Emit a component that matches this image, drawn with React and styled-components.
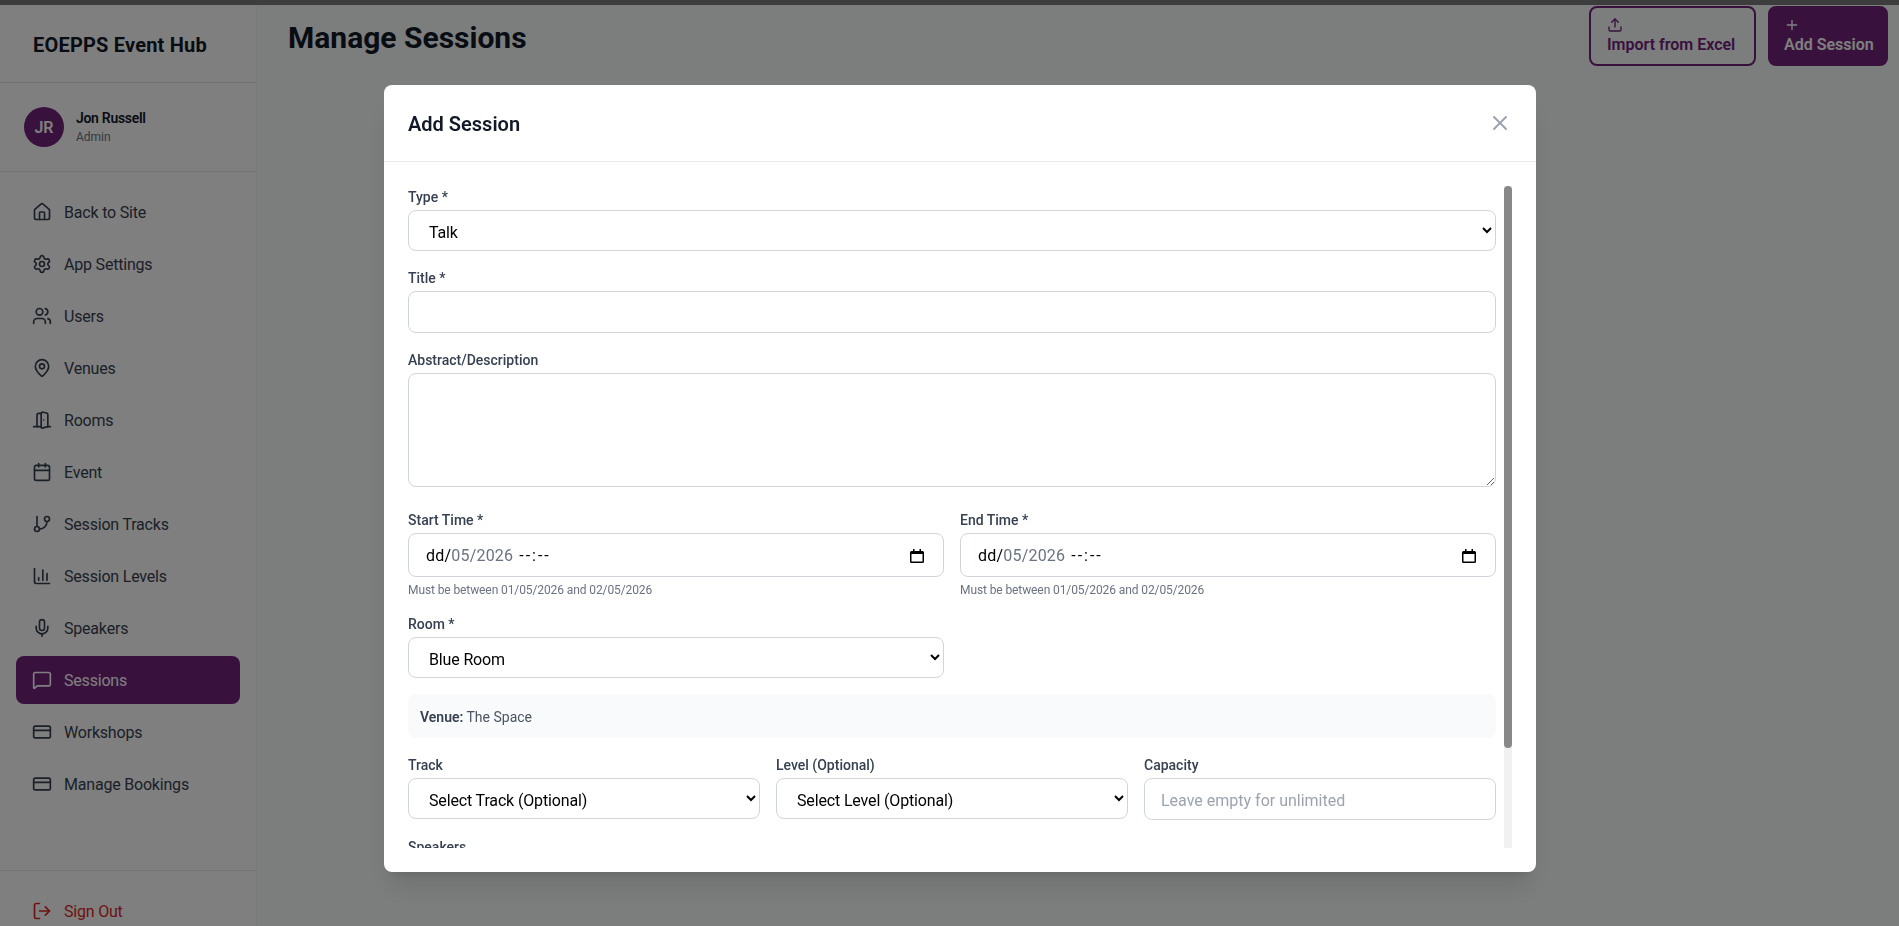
import React from 'react';
import styled, { createGlobalStyle } from 'styled-components';
import {
  Home,
  Settings,
  Users,
  MapPin,
  DoorOpen,
  Calendar,
  GitBranch,
  BarChart3,
  Mic,
  MessageSquare,
  CreditCard,
  LogOut,
  Upload,
  Plus,
  X,
} from 'lucide-react';

const FONT = `Roboto, "Noto Sans", sans-serif`;
const PRIMARY = '#71227a';

const GlobalStyle = createGlobalStyle`
  * { box-sizing: border-box; }
  html, body { margin: 0; height: 100%; overflow: hidden; }
  body { font-family: ${FONT}; background: #f9fafb; color: #111827; }
`;

const Page = styled.div`
  height: 926px;
  display: flex;
  flex-direction: column;
  overflow: hidden;
`;

const TopBar = styled.div`
  height: 5px;
  flex: none;
  background: #7a7a7a;
`;

const Shell = styled.div`
  flex: 1;
  min-height: 0;
  display: flex;
`;

const Sidebar = styled.aside`
  width: 257px;
  flex: none;
  background: #fff;
  border-right: 1px solid #f3f4f6;
  display: flex;
  flex-direction: column;
  overflow: hidden;
`;

const Brand = styled.div`
  height: 78px;
  flex: none;
  padding: 2px 32px 0 33px;
  display: flex;
  align-items: center;
  font-size: 20px;
  font-weight: 700;
  letter-spacing: 0.2px;
  color: #111827;
  border-bottom: 1px solid #e5e7eb;
`;

const UserBox = styled.div`
  height: 89px;
  flex: none;
  padding: 0 24px;
  display: flex;
  align-items: center;
  gap: 12px;
  border-bottom: 1px solid #e5e7eb;
`;

const Avatar = styled.div`
  width: 40px;
  height: 40px;
  border-radius: 50%;
  background: ${PRIMARY};
  color: #fff;
  display: flex;
  align-items: center;
  justify-content: center;
  font-size: 16px;
  font-weight: 600;
`;

const UserName = styled.div`
  font-size: 14px;
  line-height: 20px;
  font-weight: 600;
  letter-spacing: -0.3px;
  color: #111827;
`;

const UserRole = styled.div`
  font-size: 12px;
  line-height: 18px;
  color: #6b7280;
`;

const Nav = styled.nav`
  flex: 1;
  padding: 16px;
  display: flex;
  flex-direction: column;
  gap: 4px;
`;

const NavItem = styled.a`
  height: 48px;
  flex: none;
  padding: 0 16px;
  display: flex;
  align-items: center;
  gap: 12px;
  border-radius: 8px;
  font-size: 16px;
  letter-spacing: -0.2px;
  color: ${(p) => (p.$tone === 'danger' ? '#dc2626' : p.$active ? '#fff' : '#374151')};
  background: ${(p) => (p.$active ? PRIMARY : 'transparent')};
`;

const SidebarFoot = styled.div`
  flex: none;
  height: 56px;
  padding: 16px 16px 0;
  border-top: 1px solid #e5e7eb;
`;

const Main = styled.main`
  flex: 1;
  min-width: 0;
  padding: 1px 11px 0 31px;
  display: flex;
  justify-content: space-between;
  align-items: flex-start;
`;

const PageTitle = styled.h1`
  margin: 14px 0 0;
  font-size: 30px;
  line-height: 36px;
  font-weight: 700;
  color: #111827;
`;

const Actions = styled.div`
  display: flex;
  gap: 12px;
`;

const ActionButton = styled.button`
  width: ${(p) => (p.$primary ? '120px' : '167px')};
  height: 60px;
  padding: 2px 0 0 ${(p) => (p.$primary ? '14px' : '16px')};
  border-radius: 8px;
  border: 2px solid ${PRIMARY};
  background: ${(p) => (p.$primary ? PRIMARY : 'transparent')};
  color: ${(p) => (p.$primary ? '#fff' : PRIMARY)};
  font-family: ${FONT};
  font-size: 16px;
  font-weight: 600;
  line-height: 24px;
  text-align: left;
  svg { display: block; }
`;

const Overlay = styled.div`
  position: fixed;
  inset: 0;
  padding: 85px 0 0 384px;
  background: rgba(0, 0, 0, 0.5);
`;

const Modal = styled.div`
  width: 1152px;
  height: 787px;
  background: #fff;
  border-radius: 8px;
  box-shadow: 0 20px 25px -5px rgba(0, 0, 0, 0.1), 0 8px 10px -6px rgba(0, 0, 0, 0.1);
  display: flex;
  flex-direction: column;
`;

const ModalHeader = styled.div`
  height: 77px;
  flex: none;
  padding: 0 24px;
  display: flex;
  align-items: center;
  justify-content: space-between;
  border-bottom: 1px solid #e5e7eb;
`;

const ModalTitle = styled.h2`
  margin: 2px 0 0;
  font-size: 20px;
  font-weight: 600;
  color: #111827;
`;

const CloseButton = styled.button`
  padding: 0;
  border: 0;
  background: none;
  color: #9ca3af;
  display: flex;
`;

const ModalBody = styled.div`
  flex: 1;
  min-height: 0;
  margin: 24px;
  display: flex;
  gap: 8px;
`;

const FormViewport = styled.div`
  flex: 1;
  min-width: 0;
  overflow: hidden;
`;

const ScrollTrack = styled.div`
  width: 8px;
  flex: none;
  background: #f1f1f1;
`;

const ScrollThumb = styled.div`
  height: 562px;
  background: #888;
  border-radius: 4px;
`;

const Form = styled.form`
  display: flex;
  flex-direction: column;
  gap: 16px;
`;

const Field = styled.div`
  min-width: 0;
`;

const Row = styled.div`
  display: grid;
  grid-template-columns: repeat(${(p) => p.$cols}, 1fr);
  gap: 16px;
`;

const Label = styled.label`
  display: block;
  padding-top: 1px;
  margin-bottom: 3px;
  font-size: 14px;
  line-height: 20px;
  font-weight: 500;
  color: #374151;
`;

const Select = styled.select`
  display: block;
  width: 100%;
  height: 41px;
  padding: 4px 16px 0;
  background: #fff;
  border: 1px solid #d1d5db;
  border-radius: 8px;
  font-family: ${FONT};
  font-size: 16px;
  letter-spacing: -0.15px;
  color: #000;
`;

const Input = styled.input`
  display: block;
  width: 100%;
  height: 42px;
  padding: 2px 16px 0;
  background: #fff;
  border: 1px solid #d1d5db;
  border-radius: 8px;
  font-family: ${FONT};
  font-size: 16px;
  &::placeholder { color: #9ca3af; }
`;

const TextArea = styled.textarea`
  display: block;
  width: 100%;
  height: 114px;
  margin-bottom: 6px;
  padding: 8px 16px;
  border: 1px solid #d1d5db;
  border-radius: 8px;
  font-family: ${FONT};
  font-size: 16px;
`;

const DateBox = styled.div`
  height: 44px;
  padding: 1px 18px 0 17px;
  display: flex;
  align-items: center;
  border: 1px solid #d1d5db;
  border-radius: 8px;
  font-size: 16px;
  letter-spacing: 0.2px;
  color: #000;
`;

const DateMuted = styled.span`
  color: #6b7280;
`;

const DateTime = styled.span`
  margin-left: 6px;
  flex: 1;
  letter-spacing: 2px;
`;

const Help = styled.p`
  margin: 5px 0 -1px;
  font-size: 12px;
  line-height: 16px;
  letter-spacing: -0.1px;
  color: #6b7280;
`;

const VenueNote = styled.div`
  padding: 13px 12px 11px;
  background: #f9fafb;
  border-radius: 8px;
  font-size: 14px;
  line-height: 20px;
  color: #4b5563;
  strong { font-weight: 600; color: #374151; }
`;

const CalendarGlyph = () => (
  <svg width="16" height="16" viewBox="0 0 16 16" aria-hidden="true">
    <path d="M4 1h1.5v2h5V1H12v2h1.5A1.5 1.5 0 0 1 15 4.5v9a1.5 1.5 0 0 1-1.5 1.5h-11A1.5 1.5 0 0 1 1 13.5v-9A1.5 1.5 0 0 1 2.5 3H4V1zm-1.5 5v7.5h11V6h-11z" fill="#000" />
  </svg>
);

const NAV_ITEMS = [
  { label: 'Back to Site', icon: Home },
  { label: 'App Settings', icon: Settings },
  { label: 'Users', icon: Users },
  { label: 'Venues', icon: MapPin },
  { label: 'Rooms', icon: DoorOpen },
  { label: 'Event', icon: Calendar },
  { label: 'Session Tracks', icon: GitBranch },
  { label: 'Session Levels', icon: BarChart3 },
  { label: 'Speakers', icon: Mic },
  { label: 'Sessions', icon: MessageSquare, active: true },
  { label: 'Workshops', icon: CreditCard },
  { label: 'Manage Bookings', icon: CreditCard },
];

const DateField = ({ label }) => (
  <Field>
    <Label>{label}</Label>
    <DateBox>
      dd/<DateMuted>05/2026</DateMuted>
      <DateTime>--:--</DateTime>
      <CalendarGlyph />
    </DateBox>
    <Help>Must be between 01/05/2026 and 02/05/2026</Help>
  </Field>
);

const App = () => (
  <>
    <GlobalStyle />
    <Page>
      <TopBar />
      <Shell>
        <Sidebar>
          <Brand>EOEPPS Event Hub</Brand>
          <UserBox>
            <Avatar>JR</Avatar>
            <div>
              <UserName>Jon Russell</UserName>
              <UserRole>Admin</UserRole>
            </div>
          </UserBox>
          <Nav>
            {NAV_ITEMS.map(({ label, icon: Icon, active }) => (
              <NavItem key={label} $active={active}>
                <Icon size={20} />
                {label}
              </NavItem>
            ))}
          </Nav>
          <SidebarFoot>
            <NavItem $tone="danger">
              <LogOut size={20} />
              Sign Out
            </NavItem>
          </SidebarFoot>
        </Sidebar>
        <Main>
          <PageTitle>Manage Sessions</PageTitle>
          <Actions>
            <ActionButton>
              <Upload size={16} />
              Import from Excel
            </ActionButton>
            <ActionButton $primary>
              <Plus size={16} />
              Add Session
            </ActionButton>
          </Actions>
        </Main>
      </Shell>
    </Page>
    <Overlay>
      <Modal>
        <ModalHeader>
          <ModalTitle>Add Session</ModalTitle>
          <CloseButton type="button" aria-label="Close">
            <X size={24} />
          </CloseButton>
        </ModalHeader>
        <ModalBody>
          <FormViewport>
            <Form>
              <Field>
                <Label>Type *</Label>
                <Select defaultValue="Talk">
                  <option>Talk</option>
                  <option>Keynote</option>
                  <option>Panel</option>
                </Select>
              </Field>
              <Field>
                <Label>Title *</Label>
                <Input type="text" />
              </Field>
              <Field>
                <Label>Abstract/Description</Label>
                <TextArea />
              </Field>
              <Row $cols={2}>
                <DateField label="Start Time *" />
                <DateField label="End Time *" />
              </Row>
              <Row $cols={2}>
                <Field>
                  <Label>Room *</Label>
                  <Select defaultValue="Blue Room">
                    <option>Blue Room</option>
                  </Select>
                </Field>
              </Row>
              <VenueNote>
                <strong>Venue:</strong> The Space
              </VenueNote>
              <Row $cols={3}>
                <Field>
                  <Label>Track</Label>
                  <Select>
                    <option>Select Track (Optional)</option>
                  </Select>
                </Field>
                <Field>
                  <Label>Level (Optional)</Label>
                  <Select>
                    <option>Select Level (Optional)</option>
                  </Select>
                </Field>
                <Field>
                  <Label>Capacity</Label>
                  <Input type="text" placeholder="Leave empty for unlimited" />
                </Field>
              </Row>
              <Field>
                <Label>Speakers</Label>
              </Field>
            </Form>
          </FormViewport>
          <ScrollTrack>
            <ScrollThumb />
          </ScrollTrack>
        </ModalBody>
      </Modal>
    </Overlay>
  </>
);

export default App;
